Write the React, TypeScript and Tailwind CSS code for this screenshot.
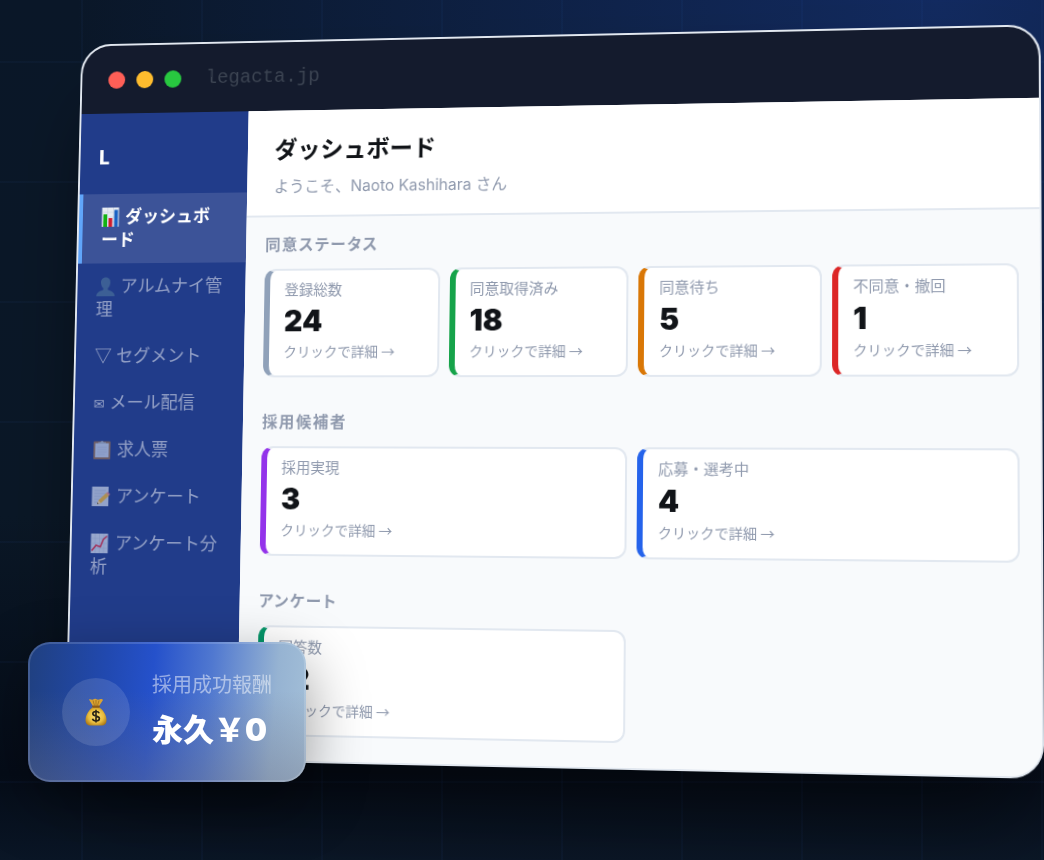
import React from 'react';

type NavItem = {
  icon: React.ReactNode;
  label: string;
  active?: boolean;
};

type Stat = {
  label: string;
  value: number;
  accent: string;
};

type StatSection = {
  title: string;
  columns: string;
  stats: Stat[];
};

const iconClass = 'mr-px inline-block h-5 w-5 align-[-4px]';

const BarChartIcon: React.FC = () => (
  <svg viewBox="0 0 20 20" className={iconClass} aria-hidden="true">
    <rect x="0.5" y="0" width="18" height="20" fill="#e6ebf2" />
    <path d="M0.5 5h18M0.5 10h18M0.5 15h18M6.5 0v20M12.5 0v20" stroke="#c3cfdd" strokeWidth="0.6" />
    <rect x="2" y="7" width="4" height="13" fill="#12b312" />
    <rect x="7.5" y="11" width="4" height="9" fill="#d01c2c" />
    <rect x="13.5" y="2.5" width="4" height="17.5" fill="#1a62c4" />
  </svg>
);

const PersonIcon: React.FC = () => (
  <svg viewBox="0 0 20 20" className={`${iconClass} opacity-50`} aria-hidden="true">
    <path
      d="M10 0.5c3.2 0 5.2 2.4 5 5.6-.1 2.6-1.2 4.600-2.600 5.700v1.500c.6 1 6.600 1.400 7.300 5.700v1H.3v-1c.7-4.300 6.700-4.700 7.300-5.700v-1.500C6.200 10.700 5.100 8.700 5 6.100 4.800 2.900 6.800.5 10 .5z"
      fill="#57819f"
    />
  </svg>
);

const ClipboardIcon: React.FC = () => (
  <svg viewBox="0 0 20 20" className={`${iconClass} opacity-70`} aria-hidden="true">
    <rect x="1" y="1.500" width="18" height="18.500" rx="1" fill="#8d6c58" />
    <rect x="2.800" y="3.500" width="14.400" height="14.500" fill="#bccbe6" />
    <path d="M6 4V2.500h2.300a1.800 1.800 0 013.400 0H14V4z" fill="#a3b1c8" />
    <path d="M5 7.500h10M5 10h10M5 12.500h10M5 15h8" stroke="#a9b9d8" strokeWidth="0.7" />
  </svg>
);

const MemoIcon: React.FC = () => (
  <svg viewBox="0 0 20 20" className={`${iconClass} opacity-70`} aria-hidden="true">
    <rect x="0.500" y="0" width="17.500" height="20" fill="#c3cfe6" />
    <path d="M3 4h12M3 7h12M3 10h9M3 13h6M3 16h5" stroke="#9fb0d0" strokeWidth="0.7" />
    <path d="M6 18l1.500-4L15.500 6.500l3 2.800L10 17z" fill="#e9b33a" />
    <path d="M15.500 6.500l1.500-1.300 2.700 2.600-1.200 1.500z" fill="#d9828a" />
    <path d="M6 18l1.500-4L10 17z" fill="#e8cfa6" />
    <path d="M6 18l.6-1.700 1 1.200z" fill="#333" />
  </svg>
);

const TrendIcon: React.FC = () => (
  <svg viewBox="0 0 20 20" className={`${iconClass} opacity-70`} aria-hidden="true">
    <rect x="0.500" y="0" width="18" height="20" fill="#c9d4ea" />
    <path d="M0.500 5h18M0.500 10h18M0.500 15h18M5 0v20M9.500 0v20M14 0v20" stroke="#b0bedb" strokeWidth="0.600" />
    <path d="M1.500 17.500L6 12l4.500 1.500L13.500 6l4-3.500" fill="none" stroke="#d8304a" strokeWidth="1.600" />
  </svg>
);

const MoneyBagIcon: React.FC = () => (
  <svg viewBox="0 0 22 28" className="h-7 w-[22px]" aria-hidden="true">
    <defs>
      <radialGradient id="bag" cx="0.5" cy="0.5" r="0.6">
        <stop offset="0" stopColor="#fbe27a" />
        <stop offset="0.6" stopColor="#e9bc3d" />
        <stop offset="1" stopColor="#a87414" />
      </radialGradient>
    </defs>
    <path d="M4 1.500c1.500-1 2.500.8 4 0 1.500-1 2-1 3-.5 1.500.8 2.500.8 4 .2 1.500-.6 2.500-.2 3 .8L13.800 8.500H8.200z" fill="#d9a233" />
    <path d="M8 2.500l1.500 5M11 2v5.500M14 2.500l-1.500 5" stroke="#9a6a14" strokeWidth="0.700" />
    <path d="M8 9c-4 3-7.500 8-7.500 13 0 4 2 5.500 5 5.500h11c3 0 5-1.500 5-5.500 0-5-3.500-10-7.500-13z" fill="url(#bag)" />
    <rect x="7" y="7.500" width="8" height="2.200" rx="1.100" fill="#8a5a1c" />
    <path
      d="M14.200 15.200c-.5-1.200-1.700-1.700-3.200-1.700-1.900 0-3.200.9-3.200 2.300 0 3.200 6.600 1.500 6.600 4.700 0 1.500-1.400 2.400-3.400 2.400-1.800 0-3.100-.7-3.500-2.100M11 11.800v12.800"
      fill="none"
      stroke="#2b2415"
      strokeWidth="1.600"
    />
  </svg>
);

const navItems: NavItem[] = [
  { icon: <BarChartIcon />, label: 'ダッシュボード', active: true },
  { icon: <PersonIcon />, label: 'アルムナイ管理' },
  { icon: <span className="font-['Noto_Sans_CJK_JP',sans-serif] leading-none">▽</span>, label: 'セグメント' },
  { icon: <span className="text-[14px] leading-none">✉</span>, label: 'メール配信' },
  { icon: <ClipboardIcon />, label: '求人票' },
  { icon: <MemoIcon />, label: 'アンケート' },
  { icon: <TrendIcon />, label: 'アンケート分析' },
];

const sections: StatSection[] = [
  {
    title: '同意ステータス',
    columns: 'grid-cols-4',
    stats: [
      { label: '登録総数', value: 24, accent: 'border-l-slate-400' },
      { label: '同意取得済み', value: 18, accent: 'border-l-[#16a34a]' },
      { label: '同意待ち', value: 5, accent: 'border-l-[#d97706]' },
      { label: '不同意・撤回', value: 1, accent: 'border-l-[#dc2626]' },
    ],
  },
  {
    title: '採用候補者',
    columns: 'grid-cols-2',
    stats: [
      { label: '採用実現', value: 3, accent: 'border-l-[#9333ea]' },
      { label: '応募・選考中', value: 4, accent: 'border-l-[#2563eb]' },
    ],
  },
  {
    title: 'アンケート',
    columns: 'grid-cols-2',
    stats: [{ label: '回答数', value: 12, accent: 'border-l-[#059669]' }],
  },
];

const TitleBar: React.FC = () => (
  <div className="flex h-[71px] items-center gap-3 bg-[#141b2d] px-7">
    <span className="h-[18px] w-[18px] rounded-full bg-[#ff5f57]" />
    <span className="h-[18px] w-[18px] rounded-full bg-[#febc2e]" />
    <span className="h-[18px] w-[18px] rounded-full bg-[#28c840]" />
    <span className="ml-3.5 font-['Liberation_Mono',monospace] text-[20px] text-[#3c4452]">legacta.jp</span>
  </div>
);

const Sidebar: React.FC = () => (
  <aside className="w-[178px] shrink-0 bg-[#213c8a]">
    <div className="px-5 pt-8 pb-6 text-[20px] leading-7 font-extrabold text-white">L</div>
    <nav>
      {navItems.map((item) => (
        <a
          key={item.label}
          href="#"
          className={
            item.active
              ? 'block border-l-4 border-[#60a5fa] bg-white/12 py-3 pr-6 pl-5 text-[18px] leading-6 font-bold text-white'
              : 'block py-3 pr-4 pl-5 text-[18px] leading-6 text-white/50'
          }
        >
          {item.icon} {item.label}
        </a>
      ))}
    </nav>
  </aside>
);

const StatCard: React.FC<{ stat: Stat }> = ({ stat }) => (
  <button
    type="button"
    className={`rounded-xl border-2 border-l-[6px] border-[#e2e8f0] bg-white px-[15px] pt-[9px] pb-3.5 text-left ${stat.accent}`}
  >
    <span className="block text-[15px] leading-[22px] text-[#8f99ad]">{stat.label}</span>
    <span className="block text-[30px] leading-10 font-black text-[#111418]">{stat.value}</span>
    <span className="block font-['Noto_Sans_CJK_JP',sans-serif] text-[14px] leading-[22px] text-[#8f99ad]">
      クリックで詳細 →
    </span>
  </button>
);

const BrowserWindow: React.FC = () => (
  <div className="overflow-hidden rounded-[32px] border-2 border-[#e2e8f0] bg-[#f8fafc] shadow-[0_50px_90px_-20px_rgba(0,0,0,0.55)] [transform:perspective(2400px)_rotateY(-8deg)_rotateX(4deg)]">
    <TitleBar />
    <div className="flex">
      <Sidebar />
      <main className="min-w-0 flex-1 bg-[#f8fafc]">
        <header className="border-b-2 border-[#e2e8f0] bg-white px-7 pt-[27px] pb-[18px]">
          <h1 className="text-[24px] leading-7 font-bold text-[#111418]">ダッシュボード</h1>
          <p className="mt-[11px] text-[16px] leading-6 text-[#8f99ad]">ようこそ、Naoto Kashihara さん</p>
        </header>
        <div className="flex flex-col gap-8 px-5 pt-[15px] pb-6">
          {sections.map((section) => (
            <section key={section.title}>
              <h2 className="mb-3 text-[16px] leading-[26px] font-bold tracking-widest text-[#8f99ad] [font-feature-settings:'palt']">
                {section.title}
              </h2>
              <div className={`grid gap-2.5 ${section.columns}`}>
                {section.stats.map((stat) => (
                  <StatCard key={stat.label} stat={stat} />
                ))}
              </div>
            </section>
          ))}
        </div>
      </main>
    </div>
  </div>
);

// Glass card that overlaps the lower left corner of the window
const FeeBadge: React.FC = () => (
  <div className="absolute -bottom-[17px] -left-[27px] flex h-[140px] w-[278px] items-center gap-[22px] rounded-[22px] border-2 border-white/15 bg-[linear-gradient(180deg,rgba(110,110,120,0)_35%,rgba(110,110,125,0.38)_100%),linear-gradient(95deg,#20407f_0%,#2149b0_28%,#2551cb_44%,#5078d0_64%,#96b3d2_87%,#a3bfd8_100%)] bg-origin-border px-8 shadow-[0_20px_60px_rgba(0,0,0,0.4)]">
    <div className="flex h-[68px] w-[68px] shrink-0 items-center justify-center rounded-full bg-white/12">
      <MoneyBagIcon />
    </div>
    <div className="pb-2 whitespace-nowrap">
      <p className="text-[20px] leading-7 text-white/50">採用成功報酬</p>
      <p className="mt-[15px] text-[31px] leading-8 font-black text-white">永久￥0</p>
    </div>
  </div>
);

const App: React.FC = () => {
  return (
    <div className="min-h-screen overflow-hidden bg-[#08111f] bg-[linear-gradient(90deg,rgba(59,130,246,0.04)_2px,transparent_2px),linear-gradient(rgba(59,130,246,0.04)_2px,transparent_2px),radial-gradient(ellipse_at_90%_0%,#122a60_0%,rgba(18,42,96,0)_65%),linear-gradient(180deg,#0a1728_0%,#0a1726_60%,#050c18_90%,#0a1626_100%)] bg-[size:120px_120px,120px_120px,auto,auto] bg-[position:81px_61px,81px_61px,0_0,0_0] pt-[30px] pr-[11px] pb-10 pl-[55px] font-['Inter','Noto_Sans_CJK_JP',sans-serif]">
      <div className="relative">
        <BrowserWindow />
        <FeeBadge />
      </div>
    </div>
  );
};

export default App;
